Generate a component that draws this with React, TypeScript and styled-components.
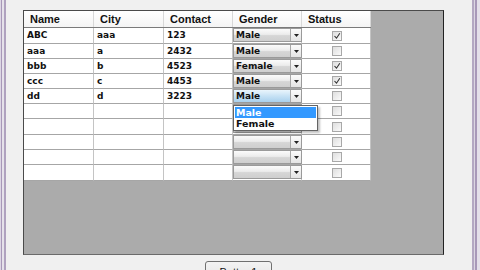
import React from 'react'
import styled, { createGlobalStyle, css } from 'styled-components'

const GlobalStyle = createGlobalStyle`
  html, body {
    margin: 0;
    padding: 0;
    background: #f0f0f0;
  }
  body {
    width: 480px;
    height: 270px;
    overflow: hidden;
    font-family: "DejaVu Sans", Verdana, sans-serif;
  }
`

interface Row {
  name: string
  city: string
  contact: string
  gender: string
  status: boolean
}

const rows: Row[] = [
  { name: 'ABC', city: 'aaa', contact: '123', gender: 'Male', status: true },
  { name: 'aaa', city: 'a', contact: '2432', gender: 'Male', status: false },
  { name: 'bbb', city: 'b', contact: '4523', gender: 'Female', status: true },
  { name: 'ccc', city: 'c', contact: '4453', gender: 'Male', status: true },
  { name: 'dd', city: 'd', contact: '3223', gender: 'Male', status: false },
  { name: '', city: '', contact: '', gender: '', status: false },
  { name: '', city: '', contact: '', gender: '', status: false },
  { name: '', city: '', contact: '', gender: '', status: false },
  { name: '', city: '', contact: '', gender: '', status: false },
  { name: '', city: '', contact: '', gender: '', status: false },
]

// rows drawn by the grid are ~15.3px tall, so some get an extra pixel
const TALL_ROWS = [0, 6, 9]
const OPEN_ROW = 4
const COLS = '70px 70px 69px 69px 69px'

const App: React.FC = () => {
  return (
    <>
      <GlobalStyle />
      <Window>
        <GridPanel>
          <HeaderRow>
            <HeadCell>Name</HeadCell>
            <HeadCell>City</HeadCell>
            <HeadCell>Contact</HeadCell>
            <HeadCell>Gender</HeadCell>
            <HeadCell>Status</HeadCell>
          </HeaderRow>
          {rows.map((r, i) => (
            <DataRow key={i} $tall={TALL_ROWS.includes(i)}>
              <Cell>{r.name}</Cell>
              <Cell>{r.city}</Cell>
              <Cell>{r.contact}</Cell>
              <ComboCell>
                <Combo $focused={i === OPEN_ROW}>
                  <ComboText>{r.gender}</ComboText>
                  <ComboArrow>
                    <svg width="5" height="3" viewBox="0 0 5 3">
                      <path d="M0 0h5L2.5 3z" fill="#222" />
                    </svg>
                  </ComboArrow>
                </Combo>
                {i === OPEN_ROW && (
                  <DropList>
                    <DropItem $selected>Male</DropItem>
                    <DropItem>Female</DropItem>
                  </DropList>
                )}
              </ComboCell>
              <CheckCell>
                <CheckBox>
                  {r.status && (
                    <svg width="8" height="8" viewBox="0 0 8 8">
                      <path d="M1.5 4l2 2.2L6.8 1.2" stroke="#333" strokeWidth="1.1" fill="none" />
                    </svg>
                  )}
                </CheckBox>
              </CheckCell>
            </DataRow>
          ))}
        </GridPanel>
        <ButtonRow>
          <Button>Button1</Button>
        </ButtonRow>
      </Window>
    </>
  )
}

const Window = styled.div`
  box-sizing: border-box;
  width: 480px;
  height: 270px;
  padding: 10px 0 0 23px;
  background: #f0f0f0;
  box-shadow: inset 1px 0 #ddd6e4, inset 2px 0 #a898b8, inset 4px 0 #e6e2ea,
    inset 6px 0 #b0a2bf, inset -3px 0 #e4dfe9, inset -5px 0 #a898b8,
    inset -6px 0 #dcd6e2, inset -8px 0 #b4a8c2;
`

const GridPanel = styled.div`
  box-sizing: border-box;
  width: 421px;
  height: 245px;
  background: #ababab;
  border: 1px solid #4a4a4a;
  border-right-color: #222;
  border-bottom-color: #6a6a6a;
`

const rowBase = css`
  display: grid;
  grid-template-columns: ${COLS};
  width: 347px;
  background: #fff;
`

const HeaderRow = styled.div`
  ${rowBase}
  height: 17px;
  box-sizing: border-box;
  border-bottom: 1px solid #7a7a7a;
  background: linear-gradient(#ffffff, #f4f4f4);
`

const HeadCell = styled.div`
  box-sizing: border-box;
  border-right: 1px solid #d8d8d8;
  padding: 1px 0 0 6px;
  font-family: "Liberation Sans", Arial, sans-serif;
  font-weight: bold;
  font-size: 11px;
  line-height: 15px;
  color: #111;
`

const DataRow = styled.div<{ $tall?: boolean }>`
  ${rowBase}
  height: ${(p) => (p.$tall ? 16 : 15)}px;
`

const Cell = styled.div`
  position: relative;
  box-sizing: border-box;
  height: 100%;
  border-right: 1px solid #c4c4c4;
  border-bottom: 1px solid #a6a6a6;
  padding: 0 0 0 3px;
  font-weight: bold;
  font-size: 9px;
  line-height: 14px;
  color: #111;
  white-space: nowrap;
`

const ComboCell = styled(Cell)`
  padding: 0;
`

const Combo = styled.div<{ $focused?: boolean }>`
  display: flex;
  box-sizing: border-box;
  height: 14px;
  width: 69px;
  border: 1px solid #9a9a9a;
  background: ${(p) =>
    p.$focused
      ? 'linear-gradient(#eaf5fc, #c4e0f4 55%, #a9d0ec)'
      : 'linear-gradient(#fbfbfb, #ececec 45%, #d6d6d6 55%, #cfcfcf)'};
`

const ComboText = styled.div`
  flex: 1;
  padding-left: 2px;
  font-size: 9px;
  font-weight: bold;
  line-height: 12px;
  color: #111;
`

const ComboArrow = styled.div`
  display: flex;
  align-items: center;
  justify-content: center;
  width: 10px;
  border-left: 1px solid #a8a8a8;
  background: linear-gradient(#fbfbfb, #e4e4e4);
`

const DropList = styled.div`
  position: absolute;
  top: 16px;
  left: 0;
  z-index: 5;
  box-sizing: border-box;
  width: 85px;
  padding: 1px;
  background: #fff;
  border: 1px solid #646464;
  box-shadow: 2px 2px 2px rgba(0, 0, 0, 0.25);
`

const DropItem = styled.div<{ $selected?: boolean }>`
  height: 11px;
  padding-left: 1px;
  font-size: 9.5px;
  font-weight: bold;
  line-height: 11px;
  color: ${(p) => (p.$selected ? '#fff' : '#111')};
  background: ${(p) => (p.$selected ? '#3399ff' : 'transparent')};
`

const CheckCell = styled(Cell)`
  display: flex;
  align-items: center;
  justify-content: center;
  padding: 0;
`

const CheckBox = styled.div`
  display: flex;
  align-items: center;
  justify-content: center;
  box-sizing: border-box;
  width: 10px;
  height: 10px;
  margin-left: 1px;
  border: 1px solid #a8a8a8;
  background: linear-gradient(135deg, #dedede, #fafafa);
`

const ButtonRow = styled.div`
  display: flex;
  margin-top: 6px;
  padding-left: 182px;
`

const Button = styled.div`
  box-sizing: border-box;
  width: 67px;
  height: 22px;
  border: 1px solid #707070;
  border-radius: 3px;
  background: linear-gradient(#f3f3f3, #ebebeb 50%, #dddddd 50%, #cfcfcf);
  font-family: "Liberation Sans", Arial, sans-serif;
  font-size: 11px;
  line-height: 20px;
  text-align: center;
  color: #111;
`

export default App
